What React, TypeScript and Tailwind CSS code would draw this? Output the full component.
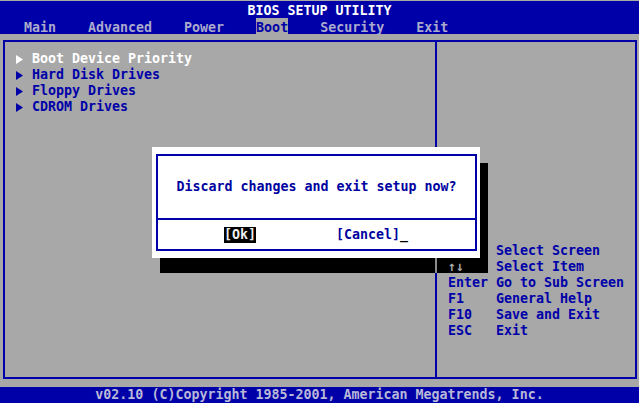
export default function App() {
  return (
    <div className="relative w-[639px] h-[403px] overflow-hidden bg-[#a8a8a8] flex flex-col font-['DejaVu_Sans_Mono',monospace] text-[13.3px] font-bold leading-[16px]">
      <header className="mt-[1px] h-[33px] bg-[#0000a8] flex flex-col">
        <div className="h-[17px] pt-[2px] leading-[15px] text-center text-white">BIOS SETUP UTILITY</div>
        <nav className="h-[16px] flex pl-[24px] gap-[32px] leading-[12px] text-[#aaaacc]">
          <span className="pt-[4px]">Main</span>
          <span className="pt-[4px]">Advanced</span>
          <span className="pt-[4px]">Power</span>
          <span className="pt-[4px] bg-[#a8a8a8] text-[#0000a8]">Boot</span>
          <span className="pt-[4px]">Security</span>
          <span className="pt-[4px]">Exit</span>
        </nav>
      </header>

      <main className="mt-[6px] ml-[3px] mr-[2px] h-[339px] border-2 border-[#0000a8] flex">
        <section className="w-[430px] pt-[9px] pl-[11px] text-[#0000a8]">
          <MenuItem label="Boot Device Priority" active />
          <MenuItem label="Hard Disk Drives" />
          <MenuItem label="Floppy Drives" />
          <MenuItem label="CDROM Drives" />
        </section>
        <aside className="flex-1 border-l-2 border-[#0000a8] pt-[201px] pl-[11px] text-[#0000a8]">
          <div className="grid grid-cols-[48px_1fr]">
            <span>←→</span>
            <span>Select Screen</span>
            <span>↑↓</span>
            <span>Select Item</span>
            <span>Enter</span>
            <span>Go to Sub Screen</span>
            <span>F1</span>
            <span>General Help</span>
            <span>F10</span>
            <span>Save and Exit</span>
            <span>ESC</span>
            <span>Exit</span>
          </div>
        </aside>
      </main>

      <footer className="mt-[8px] h-[16px] bg-[#0000a8] text-[#b8b8d8] flex items-center justify-center">
        v02.10 (C)Copyright 1985-2001, American Megatrends, Inc.
      </footer>

      {/* dialog shadow */}
      <div className="absolute left-[160px] top-[163px] w-[328px] h-[110px] bg-black">
        <div className="absolute left-[275px] top-[95px] w-[2px] h-[15px] bg-[#8c8c8c]" />
        <span className="absolute left-[288px] top-[96px] text-[#a8a8a8]">↑↓</span>
      </div>

      {/* dialog */}
      <div className="absolute left-[152px] top-[147px] w-[328px] h-[111px] bg-white pl-[4px] pr-[3px] py-[7px]">
        <div className="h-full border-2 border-[#0000a8] flex flex-col text-[#0000a0]">
          <div className="h-[62px] flex items-center justify-center">Discard changes and exit setup now?</div>
          <div className="h-[2px] bg-[#0000a8]" />
          <div className="flex-1 flex items-center pl-[66px] gap-[80px]">
            <span className="bg-black text-[#eeeeee]">[Ok]</span>
            <span>
              [Cancel]<span className="text-black">_</span>
            </span>
          </div>
        </div>
      </div>
    </div>
  )
}

function MenuItem({ label, active }: { label: string; active?: boolean }) {
  return (
    <div className={active ? "h-[16px] flex items-center text-white" : "h-[16px] flex items-center"}>
      <svg width="7" height="9" viewBox="0 0 7 9" className="mr-[9px]">
        <polygon points="0,0 7,4.5 0,9" fill="currentColor" />
      </svg>
      <span>{label}</span>
    </div>
  )
}
